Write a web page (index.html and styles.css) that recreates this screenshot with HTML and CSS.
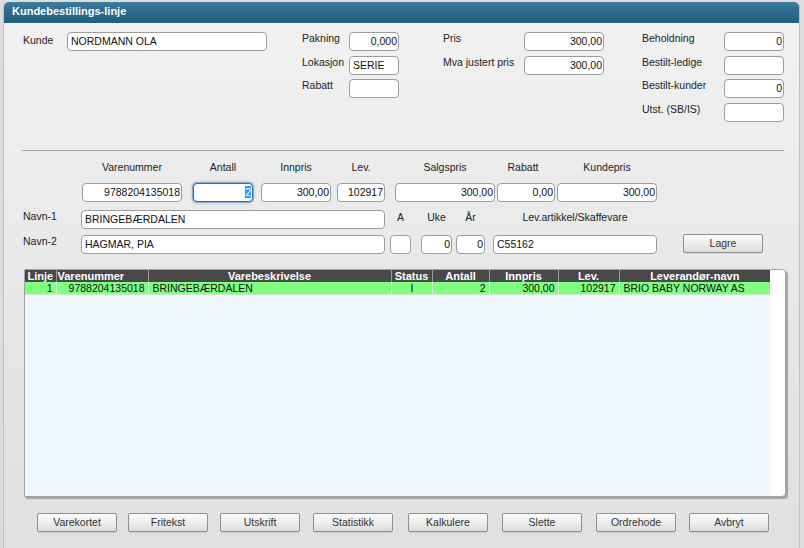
FILE: index.html
```html
<!DOCTYPE html>
<html lang="no">
<head>
<meta charset="utf-8">
<title>Kundebestillings-linje</title>
<link rel="stylesheet" href="styles.css">
</head>
<body>
<div class="window">
  <div class="titlebar">Kundebestillings-linje</div>
  <div class="content">
    <div class="top">
      <div class="grp g1">
        <span class="lbl lbl-kunde">Kunde</span><div class="field">NORDMANN OLA</div>
      </div>
      <div class="grp g2">
        <span class="lbl">Pakning</span><div class="field num">0,000</div>
        <span class="lbl">Lokasjon</span><div class="field">SERIE</div>
        <span class="lbl">Rabatt</span><div class="field"></div>
      </div>
      <div class="grp g3">
        <span class="lbl">Pris</span><div class="field num">300,00</div>
        <span class="lbl">Mva justert pris</span><div class="field num">300,00</div>
      </div>
      <div class="grp g4">
        <span class="lbl">Beholdning</span><div class="field num">0</div>
        <span class="lbl">Bestilt-ledige</span><div class="field num"></div>
        <span class="lbl">Bestilt-kunder</span><div class="field num">0</div>
        <span class="lbl">Utst. (SB/IS)</span><div class="field"></div>
      </div>
    </div>

    <div class="sep"></div>

    <div class="linefields">
      <div class="col c-varenr"><span class="clbl">Varenummer</span><div class="field num">9788204135018</div></div>
      <div class="col c-antall"><span class="clbl">Antall</span><div class="field num focus"><span class="sel">2</span></div></div>
      <div class="col c-innpris"><span class="clbl">Innpris</span><div class="field num">300,00</div></div>
      <div class="col c-lev"><span class="clbl">Lev.</span><div class="field num">102917</div></div>
      <div class="col c-salg"><span class="clbl">Salgspris</span><div class="field num">300,00</div></div>
      <div class="col c-rabatt"><span class="clbl">Rabatt</span><div class="field num">0,00</div></div>
      <div class="col c-kunde"><span class="clbl">Kundepris</span><div class="field num">300,00</div></div>
    </div>

    <div class="names">
      <span class="lbl n-lbl r1">Navn-1</span>
      <div class="field n-inp r1">BRINGEBÆRDALEN</div>
      <span class="clbl x-a r1">A</span>
      <span class="clbl x-uke r1">Uke</span>
      <span class="clbl x-aar r1">År</span>
      <span class="clbl x-lev r1">Lev.artikkel/Skaffevare</span>

      <span class="lbl n-lbl r2">Navn-2</span>
      <div class="field n-inp r2">HAGMAR, PIA</div>
      <div class="field x-a r2"></div>
      <div class="field num x-uke r2">0</div>
      <div class="field num x-aar r2">0</div>
      <div class="field x-lev r2">C55162</div>
      <button class="btn x-lagre r2">Lagre</button>
    </div>

    <div class="list">
      <div class="list-inner">
        <table class="grid">
          <colgroup>
            <col class="w-linje"><col class="w-varenr"><col class="w-besk"><col class="w-status">
            <col class="w-antall"><col class="w-innpris"><col class="w-lev"><col class="w-levnavn">
          </colgroup>
          <thead>
            <tr>
              <th>Linje</th><th class="left">Varenummer</th><th>Varebeskrivelse</th><th>Status</th>
              <th>Antall</th><th>Innpris</th><th>Lev.</th><th>Leverandør-navn</th>
            </tr>
          </thead>
          <tbody>
            <tr class="sel-row">
              <td class="r">1</td><td class="r">9788204135018</td><td>BRINGEBÆRDALEN</td><td class="c">I</td>
              <td class="r">2</td><td class="r">300,00</td><td class="r">102917</td><td>BRIO BABY NORWAY AS</td>
            </tr>
          </tbody>
        </table>
      </div>
    </div>

    <div class="buttons">
      <button class="btn">Varekortet</button>
      <button class="btn">Fritekst</button>
      <button class="btn">Utskrift</button>
      <button class="btn">Statistikk</button>
      <button class="btn">Kalkulere</button>
      <button class="btn">Slette</button>
      <button class="btn">Ordrehode</button>
      <button class="btn">Avbryt</button>
    </div>
  </div>
</div>
</body>
</html>
```

FILE: styles.css
```css
* { box-sizing: border-box; }
html, body { margin: 0; padding: 0; }
body {
  width: 804px;
  height: 548px;
  overflow: hidden;
  background: #dcdcdc;
  font-family: "Liberation Sans", Arial, sans-serif;
  font-size: 10.5px;
  color: #222;
}
.window {
  margin: 2px 0 0 4px;
  width: 795px;
  height: 560px;
  background: linear-gradient(#f2f2f2 0%, #e6e6e6 60%, #e0e0e0 100%);
  border-radius: 5px 5px 0 0;
  box-shadow: -1px 0 0 #c2c2c2, 1px 0 0 #c2c2c2;
}
.titlebar {
  height: 21px;
  line-height: 19px;
  padding: 0 0 2px 8px;
  border-radius: 5px 5px 0 0;
  background: linear-gradient(#3c7d9d 0%, #2c6b8c 45%, #235e7e 100%);
  color: #fff;
  font-weight: bold;
  font-size: 11px;
}
.content { padding-top: 9px; }

/* top section */
.top { display: flex; align-items: flex-start; padding-left: 19px; height: 90px; }
.grp { display: grid; grid-template-rows: 24px 23px 24px 19px; align-items: start; }
.g1 { grid-template-columns: 44px 200px; }
.g2 { grid-template-columns: 47px 50px; margin-left: 35px; }
.g3 { grid-template-columns: 81px 80px; margin-left: 44px; }
.g4 { grid-template-columns: 82px 60px; margin-left: 38px; }
.lbl { line-height: 13px; white-space: nowrap; color: #222; }
.lbl-kunde { padding-top: 2px; }

.field {
  height: 19px;
  background: #fff;
  border: 1px solid #9d9d9d;
  border-radius: 4px;
  padding: 0 3px;
  line-height: 17px;
  white-space: nowrap;
  overflow: hidden;
  color: #111;
}
.num { text-align: right; padding-right: 1px; }
.focus {
  border-color: #3e6e98;
  box-shadow: 0 0 0 1px rgba(90, 140, 190, 0.55), 0 0 3px 1px rgba(90, 140, 190, 0.45);
}
.sel { background: #3399ff; color: #fff; }

.sep { margin: 28px 0 0 18px; width: 762px; height: 1px; background: #a6a6a6; }

/* line fields */
.linefields { display: flex; margin: 10px 0 0 78px; }
.col { display: flex; flex-direction: column; align-items: center; }
.col .field { width: 100%; }
.clbl { line-height: 13px; white-space: nowrap; text-align: center; color: #222; }
.col .clbl { margin-bottom: 9px; }
.c-varenr { width: 100px; }
.c-antall { width: 60px; margin-left: 11px; }
.c-innpris { width: 70px; margin-left: 8px; }
.c-lev { width: 48px; margin-left: 6px; }
.c-salg { width: 100px; margin-left: 10px; }
.c-rabatt { width: 58px; margin-left: 2px; }
.c-rabatt .clbl { margin-right: 6px; }
.c-kunde { width: 100px; margin-left: 2px; }

/* names grid */
.names {
  display: grid;
  margin: 8px 0 0 19px;
  grid-template-columns: 58px 304px 5px 21px 10px 31px 4px 29px 8px 164px 26px 80px;
  grid-template-rows: 19px 19px;
  row-gap: 6px;
  align-items: start;
}
.r1 { grid-row: 1; }
.r2 { grid-row: 2; }
.n-lbl { grid-column: 1; }
.n-inp { grid-column: 2; }
.x-a { grid-column: 4; }
.x-uke { grid-column: 6; }
.x-aar { grid-column: 8; }
.x-lev { grid-column: 10; }
.x-lagre { grid-column: 12; margin-top: -1px; }
.names .clbl { padding-top: 1px; }

/* buttons */
.btn {
  height: 19px;
  width: 80px;
  padding: 0;
  border: 1px solid #8e8e8e;
  border-radius: 2px;
  background: linear-gradient(#fbfbfb 0%, #eeeeee 50%, #dcdcdc 100%);
  font-family: "Liberation Sans", Arial, sans-serif;
  font-size: 10.5px;
  color: #333;
  line-height: 17px;
  box-shadow: 0 1px 0 rgba(0,0,0,0.08);
}

/* list */
.list {
  margin: 15px 0 0 20px;
  width: 762px;
  height: 228px;
  background: #fff;
  border: 1px solid #a4a4a4;
  border-radius: 0 4px 4px 0;
  box-shadow: 2px 2px 1px rgba(0, 0, 0, 0.28);
  overflow: hidden;
}
.list-inner { width: 745px; height: 100%; background: #eef6fe; }
.grid { border-collapse: collapse; table-layout: fixed; width: 745px; }
.w-linje { width: 31px; }
.w-varenr { width: 92px; }
.w-besk { width: 243px; }
.w-status { width: 41px; }
.w-antall { width: 57px; }
.w-innpris { width: 69px; }
.w-lev { width: 61px; }
.w-levnavn { width: 151px; }
.grid th {
  height: 12px;
  line-height: 12px;
  padding: 0 1px;
  background: #484848;
  color: #fff;
  font-size: 11px;
  font-weight: bold;
  text-align: center;
  white-space: nowrap;
  overflow: hidden;
  border-right: 1px solid #9a9a9a;
}
.grid th:last-child { border-right: none; }
.grid th.left { text-align: left; }
.grid td {
  height: 12px;
  line-height: 12px;
  padding: 0 3px 0 4px;
  font-size: 10.5px;
  color: #111;
  white-space: nowrap;
  overflow: hidden;
  border-right: 1px solid #d8f6d8;
  border-bottom: 1px solid #d4e4d4;
}
.grid td:last-child { border-right: none; }
.sel-row td { background: #80fe80; }
.grid td.r { text-align: right; }
.grid td.c { text-align: center; }

.buttons {
  display: flex;
  margin: 16px 0 0 33px;
}
.buttons .btn:nth-child(2) { margin-left: 11px; }
.buttons .btn:nth-child(3) { margin-left: 12px; }
.buttons .btn:nth-child(4) { margin-left: 13px; }
.buttons .btn:nth-child(5) { margin-left: 15px; }
.buttons .btn:nth-child(6) { margin-left: 14px; }
.buttons .btn:nth-child(7) { margin-left: 14px; }
.buttons .btn:nth-child(8) { margin-left: 13px; }
```
